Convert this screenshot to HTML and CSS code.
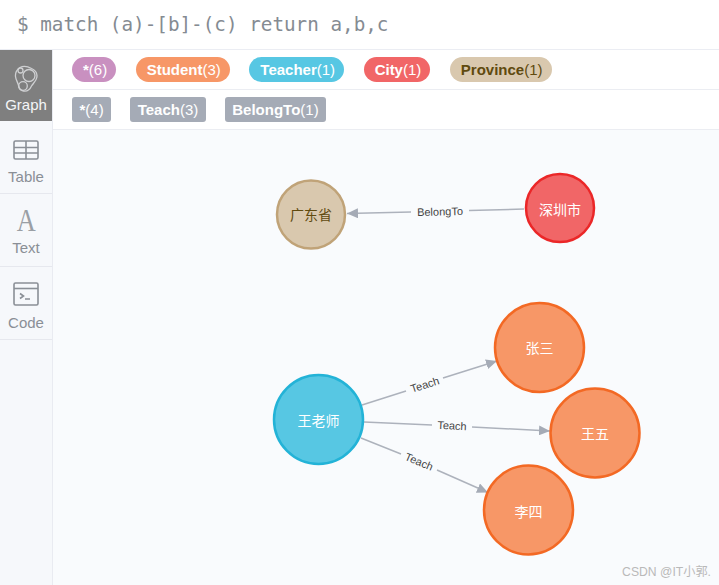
FILE: index.html
```html
<!DOCTYPE html>
<html lang="en">
  <head>
    <meta charset="UTF-8" />
    <title>Neo4j Browser</title>
    <link rel="stylesheet" href="styles.css">
  </head>
  <body>
    <div class="query-bar">$ match (a)-[b]-(c) return a,b,c</div>
    <div class="result">
      <ul class="side-tabs">
        <li class="side-tab side-tab-active">
          <svg class="tab-icon" width="24" height="28" viewBox="0 0 24 28">
            <path class="icon-thin" d="M6 2.500C9 .8 14 1.500 17.500 3.500C22 5.500 23.500 9 22.800 12.500C22.300 16 19 18.500 17.500 21C16 24.500 13 26.500 9.500 26C6.500 25.500 5 23 4.500 20.500C4 17.500 1.800 15 1.500 11.500C1.200 8 3 4.500 6 2.500Z" />
            <circle class="icon-thin" cx="15" cy="10.500" r="6" />
            <circle class="icon-thin" cx="9" cy="21" r="4.300" />
            <circle class="icon-thin" cx="6.500" cy="5.500" r="2.500" />
          </svg>
          <span class="tab-label">Graph</span>
        </li>
        <li class="side-tab">
          <svg class="tab-icon tab-icon-small" width="26" height="20" viewBox="0 0 26 20">
            <rect class="icon-line" x="1" y="1" width="24" height="18" rx="1.500" />
            <path class="icon-line" d="M1 7.500H25M1 13H25M13 1V19" />
          </svg>
          <span class="tab-label">Table</span>
        </li>
        <li class="side-tab side-tab-text">
          <span class="tab-glyph">A</span>
          <span class="tab-label">Text</span>
        </li>
        <li class="side-tab">
          <svg class="tab-icon tab-icon-small" width="26" height="24" viewBox="0 0 26 24">
            <rect class="icon-line" x="1" y="1" width="24" height="22" rx="1.500" />
            <path class="icon-line" d="M1 6.500H25" />
            <path class="icon-line" d="M7 11.500L10.500 14L7 16.500M12 17H17" />
          </svg>
          <span class="tab-label">Code</span>
        </li>
      </ul>
      <div class="viz">
        <div class="pill-row pill-row-labels">
          <span class="pill pill-all"><b>*</b>(6)</span>
          <span class="pill pill-student"><b>Student</b>(3)</span>
          <span class="pill pill-teacher"><b>Teacher</b>(1)</span>
          <span class="pill pill-city"><b>City</b>(1)</span>
          <span class="pill pill-province"><b>Province</b>(1)</span>
        </div>
        <div class="pill-row">
          <span class="pill pill-rel"><b>*</b>(4)</span>
          <span class="pill pill-rel"><b>Teach</b>(3)</span>
          <span class="pill pill-rel"><b>BelongTo</b>(1)</span>
        </div>
        <div class="canvas">
          <svg class="graph" width="666" height="455" viewBox="53 130 666 455">
            <defs>
              <marker id="arrow" markerUnits="userSpaceOnUse" markerWidth="12" markerHeight="10" refX="11" refY="5" orient="auto">
                <path class="arrow-head" d="M0 0L11 5L0 10Z" />
              </marker>
            </defs>

            <path class="edge" d="M524 209L469 210.500" />
            <path class="edge" d="M411 212L347 213.500" marker-end="url(#arrow)" />
            <text class="edge-label" x="440" y="215.500" transform="rotate(-1.500 440 212)">BelongTo</text>

            <path class="edge" d="M362 405L406 391" />
            <path class="edge" d="M443 378L497 361" marker-end="url(#arrow)" />
            <text class="edge-label" x="425" y="388.500" transform="rotate(-18 425 385)">Teach</text>

            <path class="edge" d="M364 422L432 425" />
            <path class="edge" d="M472 427L550 431" marker-end="url(#arrow)" />
            <text class="edge-label" x="452" y="429.500" transform="rotate(3 452 426)">Teach</text>

            <path class="edge" d="M361 438L401 454" />
            <path class="edge" d="M437 470L488 492.500" marker-end="url(#arrow)" />
            <text class="edge-label" x="419" y="465.500" transform="rotate(23 419 462)">Teach</text>

            <circle class="node node-province" cx="311" cy="214.500" r="34" />
            <text class="node-label node-label-dark" x="311" y="220">广东省</text>
            <circle class="node node-city" cx="560" cy="208" r="34" />
            <text class="node-label" x="560" y="215">深圳市</text>
            <circle class="node node-teacher" cx="318.500" cy="419.500" r="44.500" />
            <text class="node-label" x="318.500" y="426">王老师</text>
            <circle class="node node-student" cx="539.500" cy="347.500" r="44.500" />
            <text class="node-label" x="539.500" y="353">张三</text>
            <circle class="node node-student" cx="595" cy="433" r="44.500" />
            <text class="node-label" x="595" y="439">王五</text>
            <circle class="node node-student" cx="528.500" cy="510" r="44.500" />
            <text class="node-label" x="528.500" y="517">李四</text>
          </svg>
          <span class="watermark">CSDN @IT小郭.</span>
        </div>
      </div>
    </div>
  </body>
</html>
```

FILE: styles.css
```css
* {
  box-sizing: border-box;
}
body {
  font-family: "Liberation Sans", Arial, sans-serif;
  margin: 0;
  width: 719px;
  height: 585px;
  overflow: hidden;
  background-color: #fff;
  display: flex;
  flex-direction: column;
}
.query-bar {
  height: 50px;
  padding: 0 0 0 17px;
  display: flex;
  align-items: center;
  font-family: "DejaVu Sans Mono", monospace;
  font-size: 19.300px;
  color: #858b92;
  border-bottom: 1px solid #ebedf3;
  white-space: pre;
}
.result {
  flex: 1;
  display: flex;
  min-height: 0;
}
.side-tabs {
  list-style-type: none;
  margin: 0;
  padding: 0;
  width: 53px;
  flex-shrink: 0;
  background-color: #f6f8fb;
  border-right: 1px solid #e9ebf1;
}
.side-tab {
  height: 73px;
  display: flex;
  flex-direction: column;
  align-items: center;
  justify-content: flex-end;
  padding-bottom: 8px;
  border-bottom: 1px solid #e6e8ee;
  color: #8a8f96;
}
.side-tab-active {
  height: 71px;
  background-color: #7f7f7f;
  color: #f4f5f7;
  border-bottom: none;
}
.side-tab-text {
  padding-bottom: 10px;
}
.tab-label {
  font-size: 15px;
  line-height: 17px;
}
.tab-icon {
  display: block;
  margin-bottom: 3px;
}
.tab-icon-small {
  margin-bottom: 8px;
}
.tab-glyph {
  font-family: "Liberation Serif", serif;
  font-size: 31px;
  line-height: 30px;
  margin-bottom: 3px;
  color: #9a9fa5;
  transform: scaleX(0.85);
}
.icon-line {
  fill: none;
  stroke: #8a8f96;
  stroke-width: 1.600;
}
.icon-thin {
  fill: none;
  stroke: #cfd0d2;
  stroke-width: 1.300;
}
.viz {
  flex: 1;
  display: flex;
  flex-direction: column;
  min-width: 0;
}
.pill-row {
  height: 40px;
  flex-shrink: 0;
  display: flex;
  align-items: center;
  gap: 19px;
  padding: 0 0 1px 19px;
  border-bottom: 1px solid #ebedf2;
  background-color: #fff;
}
.pill-row-labels {
  gap: 19.500px;
}
.pill {
  height: 25px;
  padding: 0 9px 0 11px;
  border-radius: 13px;
  display: flex;
  align-items: center;
  font-size: 15px;
  color: #fff;
  white-space: pre;
}
.pill-all {
  background-color: #c990c0;
}
.pill-student {
  background-color: #f79767;
}
.pill-teacher {
  background-color: #57c7e3;
}
.pill-city {
  background-color: #f16667;
}
.pill-province {
  background-color: #d9c8ae;
  color: #604a0e;
}
.pill-rel {
  background-color: #a5abb6;
  border-radius: 3px;
  padding: 0 7.500px;
}
.canvas {
  flex: 1;
  position: relative;
  background-color: #f9fbfd;
  min-height: 0;
}
.graph {
  display: block;
}
.edge {
  fill: none;
  stroke: #adb2bc;
  stroke-width: 1.500;
}
.arrow-head {
  fill: #a5abb6;
}
.edge-label {
  font-family: "Liberation Sans", Arial, sans-serif;
  font-size: 11px;
  fill: #444;
  text-anchor: middle;
}
.node {
  stroke-width: 2.500;
}
.node-province {
  fill: #d9c8ae;
  stroke: #c0a378;
}
.node-city {
  fill: #f16667;
  stroke: #eb2728;
}
.node-teacher {
  fill: #57c7e3;
  stroke: #23b3d7;
}
.node-student {
  fill: #f79767;
  stroke: #f36924;
}
.node-label {
  font-family: "Noto Sans CJK SC", sans-serif;
  font-size: 14px;
  fill: #fff;
  text-anchor: middle;
}
.node-label-dark {
  fill: #604a0e;
}
.watermark {
  position: absolute;
  right: 8px;
  bottom: 5px;
  font-family: "Liberation Sans", "Noto Sans CJK SC", sans-serif;
  font-size: 12.200px;
  color: #b9b9b9;
}
```
